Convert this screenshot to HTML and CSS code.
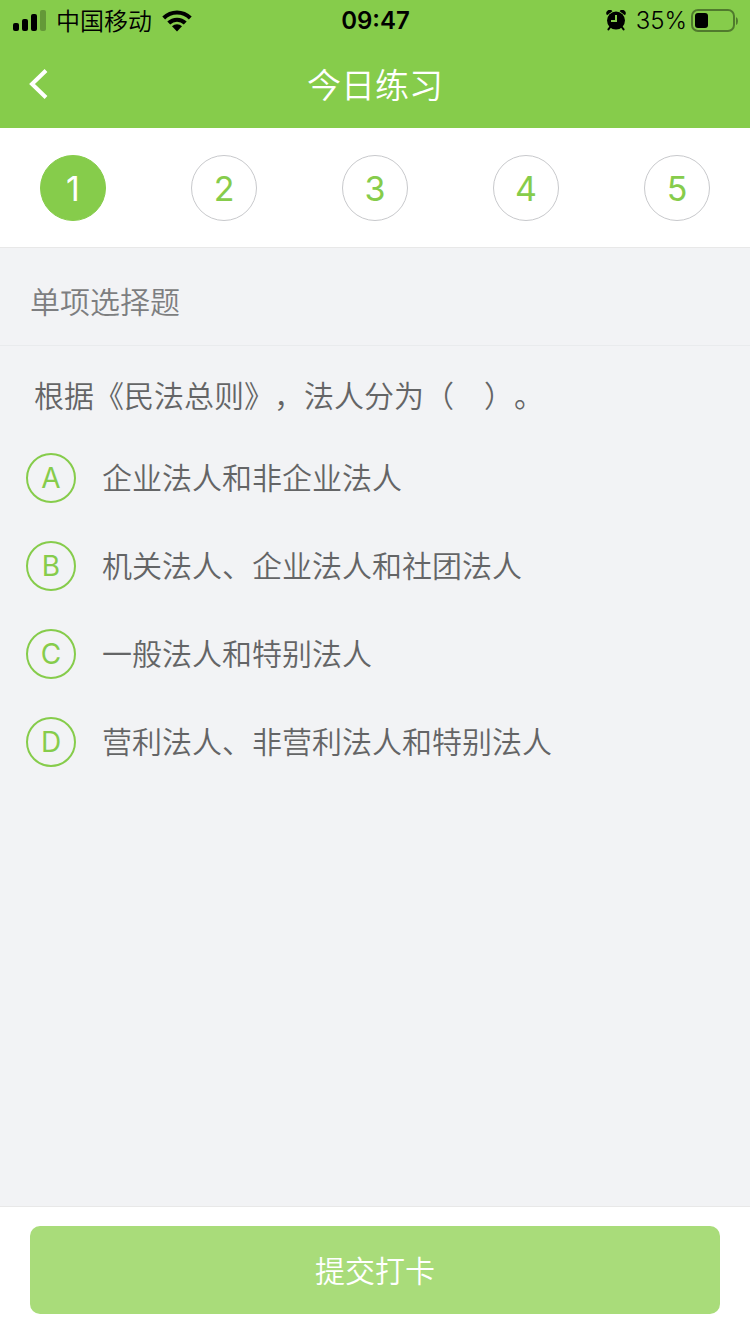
FILE: index.html
```html
<!DOCTYPE html>
<html lang="zh-CN">
<head>
  <meta charset="UTF-8">
  <meta name="viewport" content="width=device-width, initial-scale=1">
  <title>今日练习</title>
  <link rel="stylesheet" href="styles.css">
</head>
<body>

  <header class="header">
    <div class="status-bar">
      <div class="status-left">
        <svg class="icon-signal" width="34" height="22" viewBox="0 0 34 22" aria-hidden="true">
          <rect x="1" y="13" width="6" height="8" rx="2"/>
          <rect x="10" y="9" width="6" height="12" rx="2"/>
          <rect x="19" y="4" width="6" height="17" rx="2"/>
          <rect x="28" y="0" width="6" height="21" rx="2" opacity="0.25"/>
        </svg>
        <span class="carrier">中国移动</span>
        <svg class="icon-wifi" width="30" height="22" viewBox="0 0 30 22" aria-hidden="true">
          <path d="M0.3 6.5 A21 21 0 0 1 29.7 6.5 L26.9 9.4 A17 17 0 0 0 3.1 9.4 Z"/>
          <path d="M5.3 11.6 A14 14 0 0 1 24.7 11.6 L21.8 14.4 A10 10 0 0 0 8.2 14.4 Z"/>
          <path d="M10 16.2 A7.4 7.4 0 0 1 20 16.2 L15 21.5 Z"/>
        </svg>
      </div>
      <div class="status-time">09:47</div>
      <div class="status-right">
        <svg class="icon-alarm" width="20" height="22" viewBox="0 0 20 22" aria-hidden="true">
          <path d="M1 5.2 A3.2 3.2 0 0 1 6.4 1.2 Z"/>
          <path d="M19 5.2 A3.2 3.2 0 0 0 13.6 1.2 Z"/>
          <path d="M4.6 16.5 L2.4 19.4 M15.4 16.5 L17.6 19.4" stroke="#000" stroke-width="2" stroke-linecap="round"/>
          <circle cx="10" cy="10.6" r="9"/>
          <path class="hands" d="M10 5 V11 H5"/>
        </svg>
        <span class="battery-text">35%</span>
        <svg class="icon-battery" width="48" height="24" viewBox="0 0 48 24" aria-hidden="true">
          <rect x="1" y="1" width="42" height="21" rx="6" fill="none" stroke="#000" stroke-width="2" opacity="0.4"/>
          <rect x="4" y="4" width="13" height="15" rx="3"/>
          <path d="M45 8 Q47 9 47 12 Q47 15 45 16 Z" opacity="0.4"/>
        </svg>
      </div>
    </div>
    <div class="nav-bar">
      <button class="back" type="button" aria-label="返回">
        <svg width="20" height="32" viewBox="0 0 20 32" aria-hidden="true">
          <path d="M17 2.5 L3 16 L17 29.5"/>
        </svg>
      </button>
      <h1 class="title">今日练习</h1>
    </div>
  </header>

  <nav class="steps">
    <button class="step active" type="button">1</button>
    <button class="step" type="button">2</button>
    <button class="step" type="button">3</button>
    <button class="step" type="button">4</button>
    <button class="step" type="button">5</button>
  </nav>

  <main class="content">
    <h2 class="question-type">单项选择题</h2>
    <fieldset class="question">
      <legend class="question-text">根据《民法总则》，法人分为（　）。</legend>
      <label class="option">
        <span class="mark"><input type="radio" name="answer" value="A"><span>A</span></span>
        <span class="option-text">企业法人和非企业法人</span>
      </label>
      <label class="option">
        <span class="mark"><input type="radio" name="answer" value="B"><span>B</span></span>
        <span class="option-text">机关法人、企业法人和社团法人</span>
      </label>
      <label class="option">
        <span class="mark"><input type="radio" name="answer" value="C"><span>C</span></span>
        <span class="option-text">一般法人和特别法人</span>
      </label>
      <label class="option">
        <span class="mark"><input type="radio" name="answer" value="D"><span>D</span></span>
        <span class="option-text">营利法人、非营利法人和特别法人</span>
      </label>
    </fieldset>
  </main>

  <footer class="footer">
    <button class="submit" type="button">提交打卡</button>
  </footer>

</body>
</html>
```

FILE: styles.css
```css
* {
  margin: 0;
  padding: 0;
  box-sizing: border-box;
}
body {
  display: flex;
  flex-direction: column;
  min-height: 100vh;
  background: #f2f3f5;
  color: #646566;
  font-family: Inter, "Noto Sans CJK SC", sans-serif;
  font-size: 30px;
  font-weight: 350;
  text-spacing-trim: space-all;
}
button {
  border: none;
  background: none;
  font: inherit;
  cursor: pointer;
}

/* header */
.header {
  background: #86cc4b;
}
.status-bar {
  display: grid;
  grid-template-columns: 1fr auto 1fr;
  align-items: center;
  height: 40px;
  padding: 0 11px 0 12px;
  color: #000;
  font-size: 24px;
  line-height: 40px;
}
.status-left,
.status-right {
  display: flex;
  align-items: center;
}
.status-left {
  gap: 10px;
}
.carrier {
  padding-top: 2px;
}
.status-time {
  font-weight: 600;
}
.status-right {
  justify-content: flex-end;
  gap: 4px;
}
.icon-alarm {
  margin-right: 6px;
}
.hands {
  fill: none;
  stroke: #86cc4b;
  stroke-width: 2;
}
.nav-bar {
  display: grid;
  grid-template-columns: 80px 1fr 80px;
  align-items: center;
  height: 88px;
}
.back {
  display: flex;
  padding-left: 29px;
}
.back path {
  fill: none;
  stroke: #fff;
  stroke-width: 4;
}
.title {
  padding-bottom: 2px;
  color: #fff;
  font-size: 34px;
  font-weight: 350;
  text-align: center;
}

/* question numbers */
.steps {
  display: flex;
  justify-content: space-between;
  padding: 27px 40px 26px;
  background: #fff;
  border-bottom: 1px solid #e8e8e8;
}
.step {
  width: 66px;
  height: 66px;
  border: 1px solid #c8c9cc;
  border-radius: 50%;
  color: #86cc4b;
  font-size: 34px;
  font-weight: 400;
}
.step.active {
  border-color: #86cc4b;
  background: #86cc4b;
  color: #fff;
}

/* question */
.content {
  flex: 1;
}
.question-type {
  padding: 32px 30px 20px;
  border-bottom: 1px solid #e9ebed;
  color: #7d7e80;
  font-size: 30px;
  font-weight: 350;
  line-height: 45px;
}
.question {
  border: none;
  padding: 28px 26px;
}
.question-text {
  float: left;
  width: 100%;
  padding: 0 8px;
  line-height: 44px;
}
.option {
  display: flex;
  align-items: center;
  gap: 26px;
  clear: both;
  padding-bottom: 36px;
  line-height: 52px;
  cursor: pointer;
}
.question-text + .option {
  padding-top: 34px;
}
.mark {
  display: grid;
  place-items: center;
  color: #86cc4b;
  font-size: 28px;
  font-weight: 400;
}
.mark > * {
  grid-area: 1 / 1;
}
.mark input {
  appearance: none;
  width: 50px;
  height: 50px;
  border: 2px solid #86cc4b;
  border-radius: 50%;
}

/* bottom button */
.footer {
  padding: 19px 30px 20px;
  background: #fff;
  border-top: 1px solid #e8e8e8;
}
.submit {
  width: 100%;
  height: 88px;
  padding-bottom: 2px;
  border-radius: 10px;
  background: #a9dc7a;
  color: #fff;
}
```
